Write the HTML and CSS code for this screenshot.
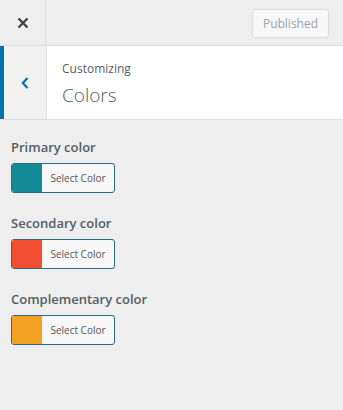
FILE: index.html
```html
<!DOCTYPE html>
<html lang="en">
<head>
    <meta charset="UTF-8">
    <meta name="viewport" content="width=device-width, initial-scale=1.0">
    <title>Customizing Colors</title>
    <link rel="stylesheet" href="styles.css">
</head>
<body>
    <div class="top-bar">
        <div class="close-btn">
            <svg width="12" height="12" viewBox="0 0 12 12">
                <path d="M1.5 1.5 L10.5 10.5 M10.5 1.5 L1.5 10.5" stroke="#444" stroke-width="2.4" fill="none"/>
            </svg>
        </div>
        <div class="top-actions">
            <button class="publish-btn">Published</button>
        </div>
    </div>

    <div class="section-head">
        <div class="back-btn">
            <svg width="10" height="14" viewBox="0 0 10 14">
                <path d="M7.5 2 L2.8 7 L7.5 12" stroke="#0073aa" stroke-width="2.2" fill="none"/>
            </svg>
        </div>
        <div class="section-title">
            <span class="crumb">Customizing</span>
            <h2>Colors</h2>
        </div>
    </div>

    <div class="controls">
        <!-- Primary -->
        <div class="control">
            <label class="control-label">Primary color</label>
            <button class="color-result">
                <span class="swatch" style="background:#148a96"></span>
                <span class="color-text">Select Color</span>
            </button>
        </div>

        <!-- Secondary -->
        <div class="control">
            <label class="control-label">Secondary color</label>
            <button class="color-result">
                <span class="swatch" style="background:#f24e31"></span>
                <span class="color-text">Select Color</span>
            </button>
        </div>

        <!-- Complementary -->
        <div class="control">
            <label class="control-label">Complementary color</label>
            <button class="color-result">
                <span class="swatch" style="background:#f3a223"></span>
                <span class="color-text">Select Color</span>
            </button>
        </div>
    </div>
</body>
</html>
```

FILE: styles.css
```css
body {
    margin: 0;
    font-family: "Open Sans", sans-serif;
    background-color: #eeeeee;
    color: #555d66;
    height: 410px;
}
.top-bar {
    display: flex;
    height: 45px;
    border-bottom: 1px solid #dddddd;
    background: #eeeeee;
}
.close-btn {
    width: 45px;
    border-right: 1px solid #dddddd;
    display: flex;
    align-items: center;
    justify-content: center;
}
.top-actions {
    flex: 1;
    display: flex;
    align-items: center;
    justify-content: flex-end;
    padding-right: 14px;
}
.publish-btn {
    font-family: "Open Sans", sans-serif;
    font-size: 12px;
    color: #a0a5aa;
    background: #f7f7f7;
    border: 1px solid #dddddd;
    border-radius: 3px;
    height: 29px;
    width: 77px;
    padding: 0;
    margin-top: 1px;
}
.section-head {
    display: flex;
    height: 73px;
    background: #ffffff;
    border-bottom: 1px solid #dddddd;
}
.back-btn {
    width: 42px;
    border-left: 4px solid #0073aa;
    border-right: 1px solid #dddddd;
    background: #f1f1f1;
    display: flex;
    align-items: center;
    justify-content: center;
}
.section-title {
    padding: 14px 0 0 15px;
}
.crumb {
    display: block;
    font-size: 12px;
    color: #555d66;
    line-height: 18px;
}
.section-title h2 {
    margin: 4px 0 0;
    font-size: 19px;
    font-weight: 300;
    color: #555d66;
    line-height: 26px;
}
.controls {
    padding: 17px 11px 0;
}
.control {
    margin-bottom: 20px;
}
.control-label {
    display: block;
    font-size: 13px;
    font-weight: 600;
    line-height: 20px;
    margin-bottom: 6px;
}
.color-result {
    display: flex;
    align-items: stretch;
    width: 104px;
    height: 30px;
    padding: 0;
    border: 1px solid #2b6a82;
    border-radius: 3px;
    background: #f7f7f7;
    overflow: hidden;
}
.swatch {
    width: 30px;
}
.color-text {
    flex: 1;
    font-family: "Open Sans", sans-serif;
    font-size: 10px;
    color: #555555;
    line-height: 28px;
    text-align: center;
}
```
